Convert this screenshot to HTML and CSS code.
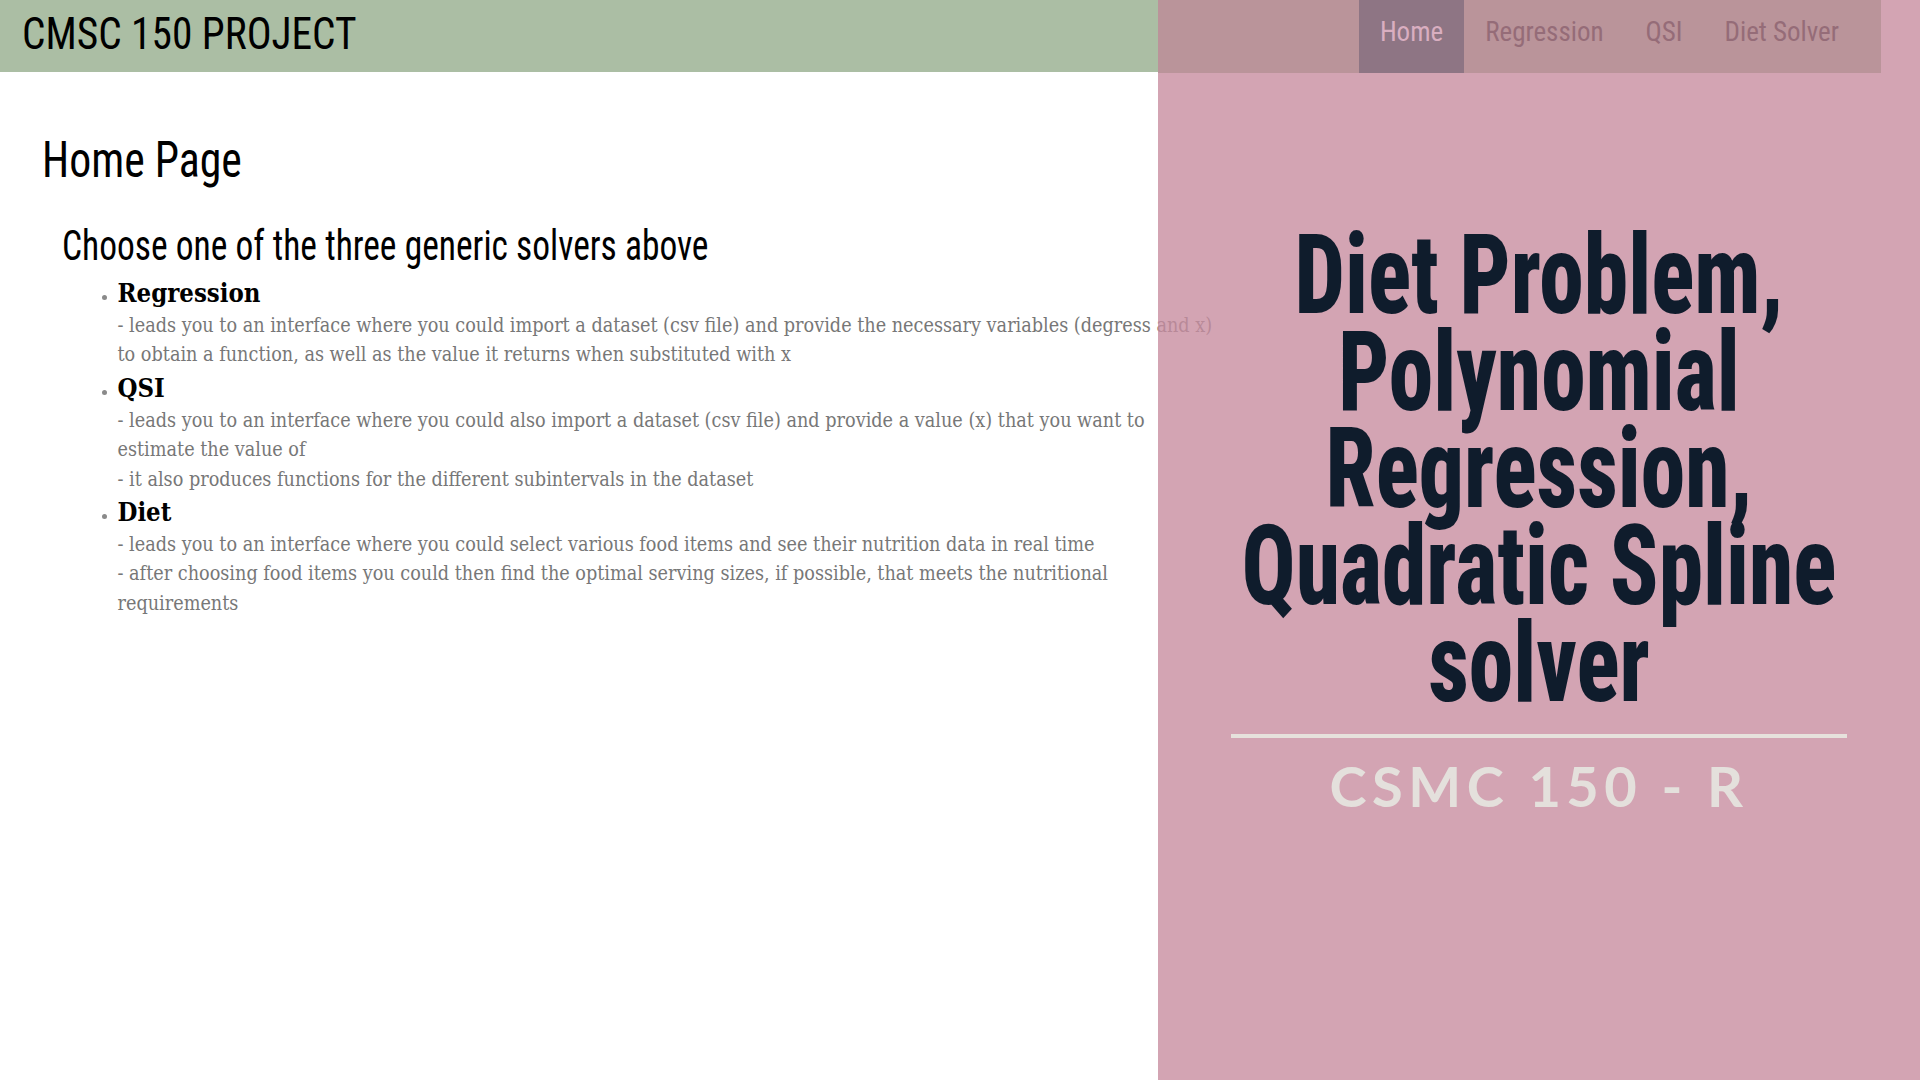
FILE: index.html
```html
<!DOCTYPE html>
<html lang="en">
<head>
<meta charset="utf-8">
<title>CMSC 150 Project</title>
<link rel="stylesheet" href="styles.css">
</head>
<body>
<div class="page">
  <main class="main">
    <header class="topbar">
      <div class="brand">CMSC 150 PROJECT</div>
    </header>
    <section class="content">
      <h1 class="page-title">Home Page</h1>
      <h2 class="subtitle">Choose one of the three generic solvers above</h2>
      <ul class="solvers">
        <li>
          <div class="solver-name">Regression</div>
          <div class="solver-desc">- leads you to an interface where you could import a dataset (csv file) and provide the necessary variables (degress and x) to obtain a function, as well as the value it returns when substituted with x</div>
        </li>
        <li>
          <div class="solver-name">QSI</div>
          <div class="solver-desc">- leads you to an interface where you could also import a dataset (csv file) and provide a value (x) that you want to estimate the value of<br>- it also produces functions for the different subintervals in the dataset</div>
        </li>
        <li>
          <div class="solver-name">Diet</div>
          <div class="solver-desc">- leads you to an interface where you could select various food items and see their nutrition data in real time<br>- after choosing food items you could then find the optimal serving sizes, if possible, that meets the nutritional requirements</div>
        </li>
      </ul>
    </section>
  </main>
  <aside class="panel">
    <nav class="nav">
      <a class="nav-item active" href="#">Home</a>
      <a class="nav-item" href="#">Regression</a>
      <a class="nav-item" href="#">QSI</a>
      <a class="nav-item" href="#">Diet Solver</a>
    </nav>
    <div class="hero">
      <h2 class="hero-title">Diet Problem, Polynomial Regression, Quadratic Spline solver</h2>
      <div class="hero-rule"></div>
      <div class="hero-sub">CSMC 150 - R</div>
    </div>
  </aside>
</div>
</body>
</html>
```
FILE: styles.css
```css
html, body {
  margin: 0;
  padding: 0;
  background: #ffffff;
}

.page {
  display: grid;
  grid-template-columns: 1158px 762px;
  height: 100vh;
  overflow: hidden;
}

.main {
  min-width: 0;
}

.topbar {
  height: 72px;
  box-sizing: border-box;
  background: #abbea4;
  padding: 12px 0 0 22px;
}

.brand {
  font-family: Roboto, "DejaVu Sans", sans-serif;
  font-stretch: 75%;
  font-size: 44px;
  line-height: 1;
  color: #000;
  transform: scaleX(0.94);
  transform-origin: left top;
}

.content {
  width: 1218px;
  padding-left: 42px;
  box-sizing: border-box;
}

.page-title {
  font-family: Roboto, "DejaVu Sans", sans-serif;
  font-stretch: 75%;
  font-weight: normal;
  font-size: 50px;
  line-height: 1;
  margin: 63px 0 0 0;
  color: #000;
  transform: scaleX(0.876);
  transform-origin: left top;
}

.subtitle {
  font-family: Roboto, "DejaVu Sans", sans-serif;
  font-stretch: 75%;
  font-weight: normal;
  font-size: 43px;
  line-height: 1;
  margin: 39px 0 0 20px;
  color: #000;
  transform: scaleX(0.825);
  transform-origin: left top;
}

.solvers {
  margin: 8px 0 0 0;
  padding-left: 75.5px;
  color: #8a8a8a;
  font-family: "DejaVu Serif", serif;
  font-size: 15px;
}

.solvers li {
  margin: 0;
}

.solver-name {
  font-family: "DejaVu Serif", serif;
  font-stretch: condensed;
  font-weight: bold;
  font-size: 25.5px;
  line-height: 36px;
  color: #000;
}

.solver-desc {
  font-family: "DejaVu Serif", serif;
  font-stretch: condensed;
  font-size: 19.65px;
  line-height: 29.4px;
  color: #777;
}

.panel {
  position: relative;
  background: rgba(200, 141, 160, 0.8);
  display: flex;
  flex-direction: column;
}

.nav {
  display: flex;
  justify-content: flex-end;
  height: 73px;
  margin-right: 39px;
  padding-right: 21px;
  background: #ba949a;
}

.nav-item {
  font-family: Roboto, "DejaVu Sans", sans-serif;
  font-stretch: 75%;
  font-size: 27px;
  line-height: 1;
  color: #956c78;
  text-decoration: none;
  padding: 19px 21px 0 21px;
}

.nav-item.active {
  background: #8e7584;
  color: #d9aec0;
}

.hero {
  display: flex;
  flex-direction: column;
  align-items: center;
  padding-top: 153px;
}

.hero-title {
  font-family: Roboto, "DejaVu Sans", sans-serif;
  font-stretch: 75%;
  font-weight: 800;
  font-size: 112px;
  line-height: 97px;
  color: #0f1c2c;
  text-align: center;
  margin: 0;
  width: 800px;
  flex: none;
  transform: scaleX(0.8);
}

.hero-rule {
  width: 616px;
  height: 4px;
  background: #e6e1dc;
  margin-top: 23px;
}

.hero-sub {
  font-family: Lato, sans-serif;
  font-weight: bold;
  font-size: 56px;
  letter-spacing: 5.5px;
  color: #e4e0dc;
  margin-top: 20px;
  line-height: 1;
}
```
